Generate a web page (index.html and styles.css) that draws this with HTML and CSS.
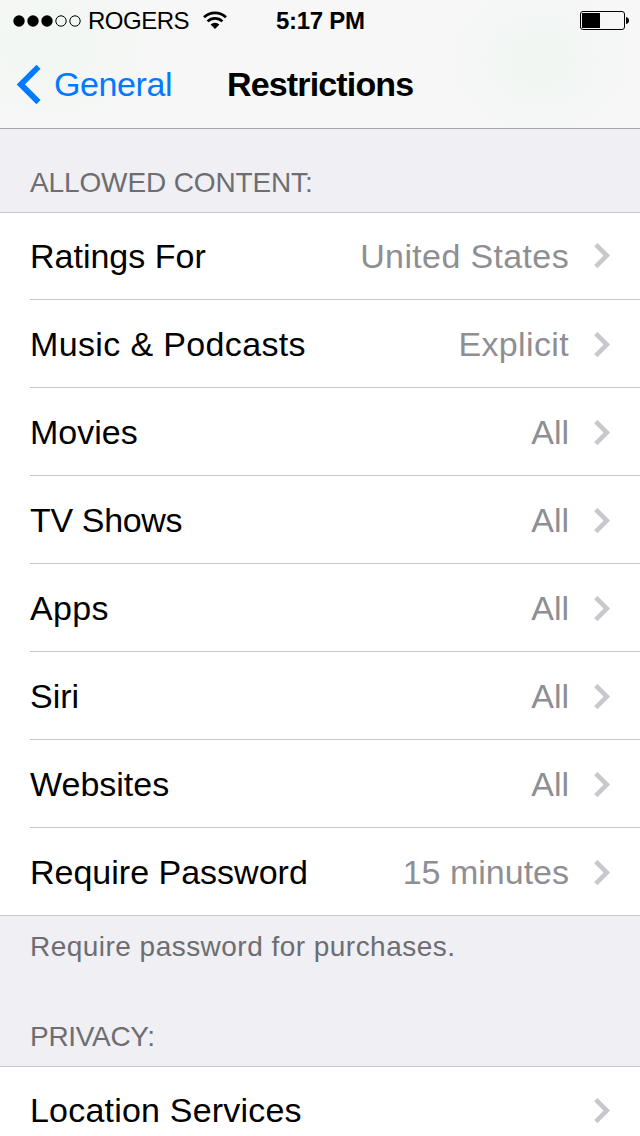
FILE: index.html
```html
<!DOCTYPE html>
<html lang="en">
<head>
    <meta charset="UTF-8">
    <meta name="viewport" content="width=device-width, initial-scale=1.0">
    <title>Restrictions</title>
    <link rel="stylesheet" href="styles.css">
</head>
<body>
    <svg class="symbols" width="0" height="0">
        <symbol id="chevron" viewBox="0 0 18 28">
            <path d="M1.8 2.6 L12.8 13.6 L1.8 24.6" fill="none" stroke="#c7c7cc" stroke-width="4.6"/>
        </symbol>
    </svg>

    <header class="top">
        <div class="status-bar">
            <div class="status-left">
                <svg class="signal" width="68" height="12" viewBox="0 0 68 12">
                    <circle cx="6" cy="6" r="5.7"/>
                    <circle cx="20" cy="6" r="5.7"/>
                    <circle cx="34" cy="6" r="5.7"/>
                    <circle cx="48" cy="6" r="5.2" fill="none" stroke="#000"/>
                    <circle cx="62" cy="6" r="5.2" fill="none" stroke="#000"/>
                </svg>
                <span class="carrier">ROGERS</span>
                <svg class="wifi" width="24" height="18" viewBox="0 0 24 18">
                    <path d="M1 6.2 A16 16 0 0 1 23 6.2" fill="none" stroke="#000" stroke-width="2.8"/>
                    <path d="M4.6 10.4 A10.4 10.4 0 0 1 19.4 10.4" fill="none" stroke="#000" stroke-width="2.7"/>
                    <path d="M12 18 L7.6 13.6 A6.4 6.4 0 0 1 16.4 13.6 Z"/>
                </svg>
            </div>
            <span class="time">5:17 PM</span>
            <svg class="battery" width="50" height="20" viewBox="0 0 50 20">
                <rect x="0.5" y="0.5" width="44" height="18" rx="2.5" fill="none" stroke="#000"/>
                <rect x="2" y="2" width="18" height="15" rx="0.5"/>
                <path d="M46 6 Q49 6.5 49 9.5 T46 13 Z"/>
            </svg>
        </div>
        <nav class="nav-bar">
            <a class="back">
                <svg width="26" height="42" viewBox="0 0 26 42">
                    <path d="M22.5 3.7 L4.8 21.4 L22.5 39.1" fill="none" stroke="#007aff" stroke-width="5.8"/>
                </svg>
                <span>General</span>
            </a>
            <h1>Restrictions</h1>
        </nav>
    </header>

    <main>
        <h2 class="section-title allowed">ALLOWED CONTENT:</h2>
        <ul class="list">
            <li><span class="label">Ratings For</span><span class="value wide">United States</span><svg class="arrow"><use href="#chevron"/></svg></li>
            <li><span class="label wide">Music &amp; Podcasts</span><span class="value wide">Explicit</span><svg class="arrow"><use href="#chevron"/></svg></li>
            <li><span class="label">Movies</span><span class="value">All</span><svg class="arrow"><use href="#chevron"/></svg></li>
            <li><span class="label tight">TV Shows</span><span class="value">All</span><svg class="arrow"><use href="#chevron"/></svg></li>
            <li><span class="label wide">Apps</span><span class="value">All</span><svg class="arrow"><use href="#chevron"/></svg></li>
            <li><span class="label">Siri</span><span class="value">All</span><svg class="arrow"><use href="#chevron"/></svg></li>
            <li><span class="label">Websites</span><span class="value">All</span><svg class="arrow"><use href="#chevron"/></svg></li>
            <li><span class="label">Require Password</span><span class="value">15 minutes</span><svg class="arrow"><use href="#chevron"/></svg></li>
        </ul>
        <p class="note">Require password for purchases.</p>
        <h2 class="section-title privacy">PRIVACY:</h2>
        <ul class="list">
            <li><span class="label loose">Location Services</span><svg class="arrow"><use href="#chevron"/></svg></li>
        </ul>
    </main>
</body>
</html>
```

FILE: styles.css
```css
* {
    box-sizing: border-box;
}

body {
    margin: 0;
    width: 640px;
    height: 1136px;
    overflow: hidden;
    background-color: #efeff4;
    font-family: "Liberation Sans", Arial, sans-serif;
    color: #000;
}

.symbols {
    display: block;
}

.top {
    height: 129px;
    background-color: #f7f7f7;
    background-image:
        radial-gradient(ellipse 110px 90px at 540px 60px, #f0f6f2, rgba(247, 247, 247, 0)),
        radial-gradient(ellipse 120px 90px at 50px 45px, #f1f7f2, rgba(247, 247, 247, 0));
    border-bottom: 1px solid #a7a7aa;
}

.status-bar {
    height: 40px;
    padding-top: 2px;
    display: grid;
    grid-template-columns: 264px 1fr 60px;
    align-items: center;
    font-size: 24px;
}

.status-left {
    display: flex;
    align-items: center;
    padding-left: 12.5px;
}

.carrier {
    margin-left: 7.5px;
    width: 102px;
    letter-spacing: -0.5px;
}

.wifi {
    margin-left: 12.5px;
    margin-bottom: 2px;
}

.time {
    padding-left: 12px;
    font-weight: bold;
    letter-spacing: -0.3px;
}

.nav-bar {
    height: 88px;
    display: flex;
    align-items: center;
}

.back {
    display: flex;
    align-items: center;
    width: 227px;
    padding-left: 16px;
    font-size: 34px;
    letter-spacing: -0.4px;
    color: #007aff;
}

.back span {
    margin-left: 12px;
}

h1 {
    margin: 0;
    font-size: 34px;
    letter-spacing: -0.85px;
}

.section-title {
    margin: 0;
    padding: 0 30px 12px;
    display: flex;
    align-items: flex-end;
    font-size: 28px;
    font-weight: normal;
    line-height: 34px;
    color: #6d6d72;
}

.allowed {
    height: 83px;
    letter-spacing: -0.13px;
}

.list {
    margin: 0;
    padding: 0 0 0 30px;
    list-style: none;
    background-color: #fff;
    border-top: 1px solid #c8c7cc;
    border-bottom: 1px solid #c8c7cc;
}

.list li {
    height: 88px;
    display: flex;
    align-items: center;
    padding-top: 2px;
    padding-right: 28px;
    border-bottom: 1px solid #c8c7cc;
    font-size: 34px;
}

.list li:last-child {
    height: 87px;
    border-bottom: none;
}

.list li:first-child {
    height: 87px;
    padding-top: 0;
}

.value {
    margin-left: auto;
    color: #8e8e93;
}

.label {
    letter-spacing: 0;
}

.loose {
    letter-spacing: 0.2px;
}

.wide {
    letter-spacing: 0.36px;
}

.tight {
    letter-spacing: -0.35px;
}

.arrow {
    width: 18px;
    height: 28px;
    margin-left: 25px;
}

.label + .arrow {
    margin-left: auto;
}

.note {
    margin: 0;
    height: 60px;
    padding: 14px 30px;
    font-size: 28px;
    line-height: 34px;
    letter-spacing: 0.47px;
    color: #6d6d72;
}

.privacy {
    height: 90px;
    letter-spacing: -0.3px;
}
```
